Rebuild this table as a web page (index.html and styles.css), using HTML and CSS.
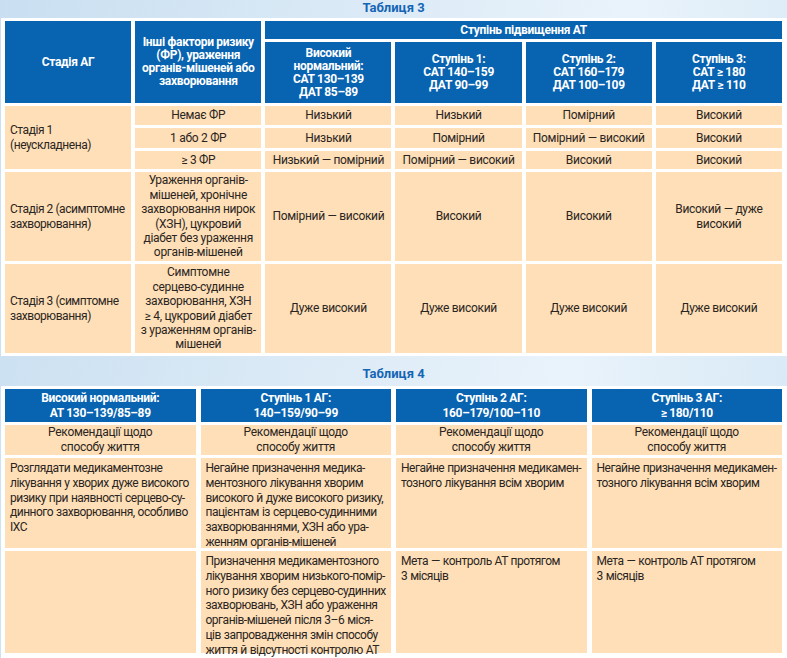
FILE: index.html
```html
<!DOCTYPE html>
<html lang="uk">
<head>
<meta charset="utf-8">
<link rel="stylesheet" href="styles.css">
</head>
<body>
<div class="page">
  <div class="title t3">Таблиця 3</div>
  <div class="frame f3">
    <div class="grid3">
      <div class="h sp-r2">Стадія АГ</div>
      <div class="h sp-r2">Інші фактори ризику<br>(ФР), ураження<br>органів-мішеней або<br>захворювання</div>
      <div class="h sp-c4">Ступінь підвищення АТ</div>
      <div class="h">Високий<br>нормальний:<br>САТ 130–139<br>ДАТ 85–89</div>
      <div class="h">Ступінь 1:<br>САТ 140–159<br>ДАТ 90–99</div>
      <div class="h">Ступінь 2:<br>САТ 160–179<br>ДАТ 100–109</div>
      <div class="h">Ступінь 3:<br>САТ ≥ 180<br>ДАТ ≥ 110</div>

      <div class="c l sp-r3">Стадія 1<br>(неускладнена)</div>
      <div class="c">Немає ФР</div>
      <div class="c">Низький</div>
      <div class="c">Низький</div>
      <div class="c">Помірний</div>
      <div class="c">Високий</div>

      <div class="c">1 або 2 ФР</div>
      <div class="c">Низький</div>
      <div class="c">Помірний</div>
      <div class="c">Помірний — високий</div>
      <div class="c">Високий</div>

      <div class="c">≥ 3 ФР</div>
      <div class="c">Низький — помірний</div>
      <div class="c">Помірний — високий</div>
      <div class="c">Високий</div>
      <div class="c">Високий</div>

      <div class="c l">Стадія 2 (асимптомне<br>захворювання)</div>
      <div class="c">Ураження органів-<br>мішеней, хронічне<br>захворювання нирок<br>(ХЗН), цукровий<br>діабет без ураження<br>органів-мішеней</div>
      <div class="c">Помірний — високий</div>
      <div class="c">Високий</div>
      <div class="c">Високий</div>
      <div class="c">Високий — дуже<br>високий</div>

      <div class="c l">Стадія 3 (симптомне<br>захворювання)</div>
      <div class="c">Симптомне<br>серцево-судинне<br>захворювання, ХЗН<br>≥ 4, цукровий діабет<br>з ураженням органів-<br>мішеней</div>
      <div class="c">Дуже високий</div>
      <div class="c">Дуже високий</div>
      <div class="c">Дуже високий</div>
      <div class="c">Дуже високий</div>
    </div>
  </div>

  <div class="title t4">Таблиця 4</div>
  <div class="frame f4">
    <div class="grid4">
      <div class="h">Високий нормальний:<br>АТ 130–139/85–89</div>
      <div class="h">Ступінь 1 АГ:<br>140–159/90–99</div>
      <div class="h">Ступінь 2 АГ:<br>160–179/100–110</div>
      <div class="h">Ступінь 3 АГ:<br>≥ 180/110</div>

      <div class="c r">Рекомендації щодо<br>способу життя</div>
      <div class="c r">Рекомендації щодо<br>способу життя</div>
      <div class="c r">Рекомендації щодо<br>способу життя</div>
      <div class="c r">Рекомендації щодо<br>способу життя</div>

      <div class="c t">Розглядати медикаментозне<br>лікування у хворих дуже високого<br>ризику при наявності серцево-су-<br>динного захворювання, особливо<br>ІХС</div>
      <div class="c t">Негайне призначення медика-<br>ментозного лікування хворим<br>високого й дуже високого ризику,<br>пацієнтам із серцево-судинними<br>захворюваннями, ХЗН або ура-<br>женням органів-мішеней</div>
      <div class="c t">Негайне призначення медикамен-<br>тозного лікування всім хворим</div>
      <div class="c t">Негайне призначення медикамен-<br>тозного лікування всім хворим</div>

      <div class="c t"></div>
      <div class="c t">Призначення медикаментозного<br>лікування хворим низького-помір-<br>ного ризику без серцево-судинних<br>захворювань, ХЗН або ураження<br>органів-мішеней після 3–6 міся-<br>ців запровадження змін способу<br>життя й відсутності контролю АТ</div>
      <div class="c t">Мета — контроль АТ протягом<br>3 місяців</div>
      <div class="c t">Мета — контроль АТ протягом<br>3 місяців</div>
    </div>
  </div>
</div>
</body>
</html>
```

FILE: styles.css
```css
html, body {
  margin: 0;
  padding: 0;
}
body {
  width: 787px;
  height: 658px;
  overflow: hidden;
  font-family: Roboto, "Liberation Sans", sans-serif;
  color: #2b2522;
  background: linear-gradient(100deg, #c9dff1 0%, #dbeaf6 40%, #e9f3fb 70%, #d6e8f5 100%);
}
.page {
  display: flex;
  flex-direction: column;
}
.title {
  text-align: center;
  font-family: Roboto, "Liberation Sans", sans-serif;
  font-weight: bold;
  color: #1565b5;
  font-size: 13px;
  line-height: 14px;
}
.t3 {
  padding-top: 1px;
  height: 17px;
}
.t4 {
  margin-top: 11px;
  height: 19px;
}
.frame {
  background: #fff;
  margin-left: 1px;
}
.f3 {
  padding: 3px 5px 3px 4px;
}
.f4 {
  padding: 3px 5px 5px 4px;
}
.grid3 {
  display: grid;
  grid-template-columns: repeat(6, minmax(0, 1fr));
  grid-template-rows: 18px 61px 19px 20px 18px 89px 89px;
  column-gap: 4px;
  row-gap: 3px;
}
.grid4 {
  display: grid;
  grid-template-columns: repeat(4, minmax(0, 1fr));
  grid-template-rows: 33px 30px 90px 102px;
  column-gap: 5px;
  row-gap: 3px;
}
.h, .c {
  white-space: nowrap;
  letter-spacing: -0.3px;
  overflow: visible;
}
.h {
  background: #0863b1;
  color: #fff;
  font-weight: bold;
  font-size: 12px;
  line-height: 13px;
  display: flex;
  align-items: center;
  justify-content: center;
  text-align: center;
}
.grid4 .h {
  line-height: 15px;
}
.c {
  background: #fedfb7;
  font-size: 12px;
  line-height: 14.4px;
  display: flex;
  align-items: center;
  justify-content: center;
  text-align: center;
}
.c.l {
  justify-content: flex-start;
  text-align: left;
  padding-left: 5px;
  letter-spacing: -0.45px;
}
.c.r {
  line-height: 15px;
}
.c.t {
  align-items: flex-start;
  justify-content: flex-start;
  text-align: left;
  padding: 3px 2px 0 5px;
  line-height: 14.8px;
  font-size: 12px;
  letter-spacing: -0.5px;
  word-spacing: 0.5px;
}
.sp-r2 {
  grid-row: span 2;
}
.sp-r3 {
  grid-row: span 3;
}
.sp-c4 {
  grid-column: span 4;
}
```
